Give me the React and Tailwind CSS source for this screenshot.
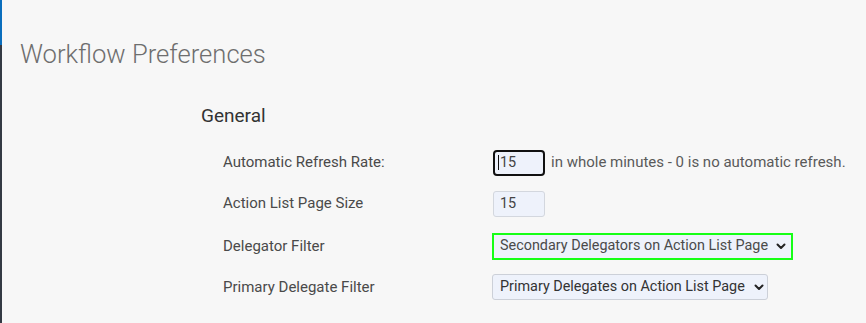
import React from "react";

const Chevron = () => (
  <svg width="10" height="7" viewBox="0 0 10 7" className="shrink-0">
    <path d="M1.5 1.5 L5 5 L8.5 1.5" fill="none" stroke="#222" strokeWidth="2" strokeLinecap="round" strokeLinejoin="round" />
  </svg>
);

export default function App() {
  const font = { fontFamily: "Roboto, 'Noto Sans', sans-serif" };
  return (
    <div className="flex w-[866px] h-[323px] bg-[#f7f7f7] overflow-hidden" style={font}>
      <div className="flex flex-col w-[2px] shrink-0">
        <div className="h-[45px] bg-[#0a6ebd]" />
        <div className="flex-1 bg-[#343a44]" />
      </div>
      <div className="flex-1 flex flex-col">
        <h1 className="mt-[38px] ml-[18px] text-[25.6px] leading-[32px] font-light text-[#6e6e6e]">
          Workflow Preferences
        </h1>
        <div className="ml-[199px] mt-[32px] flex flex-col">
          <h2 className="text-[19px] leading-[28px] text-[#333]">General</h2>
          <div className="mt-[12px] flex flex-col text-[15px] text-[#4a4a4a]">
            <div className="flex items-center h-[41px]">
              <div className="w-[292px] pl-[22px]">Automatic Refresh Rate:</div>
              <div className="flex items-center h-[26px] w-[52px] rounded-[4px] border-2 border-[#111] bg-[#eef2fb] pl-[3px] text-[14.4px] text-[#444]">
                <span className="w-px h-[15px] bg-[#111] mr-[1px]" />
                15
              </div>
              <span className="ml-[6px] text-[#5a5a5a]">in whole minutes - 0 is no automatic refresh.</span>
            </div>
            <div className="flex items-center h-[41px]">
              <div className="w-[292px] pl-[22px]">Action List Page Size</div>
              <div className="flex items-center h-[26px] w-[52px] rounded-[3px] border border-[#d3d7de] bg-[#eef2fb] pl-[6px] text-[14.4px] text-[#444]">
                15
              </div>
            </div>
            <div className="flex items-center h-[42px] pt-[2px]">
              <div className="w-[291px] pl-[22px]">Delegator Filter</div>
              <div className="flex items-center justify-between h-[27px] w-[301px] border-2 border-[#16ff16] bg-[#eef2fb] pl-[6px] pr-[5px] text-[14.4px] text-[#4a4a4a]">
                <span>Secondary Delegators on Action List Page</span>
                <Chevron />
              </div>
            </div>
            <div className="flex items-center h-[41px] pt-[1px]">
              <div className="w-[291px] pl-[22px]">Primary Delegate Filter</div>
              <div className="flex items-center justify-between h-[26px] w-[276px] rounded-[3px] border border-[#ccd0d8] bg-[#eef2fb] pl-[7px] pr-[3px] text-[14.4px] text-[#333]">
                <span>Primary Delegates on Action List Page</span>
                <Chevron />
              </div>
            </div>
          </div>
        </div>
      </div>
    </div>
  );
}
